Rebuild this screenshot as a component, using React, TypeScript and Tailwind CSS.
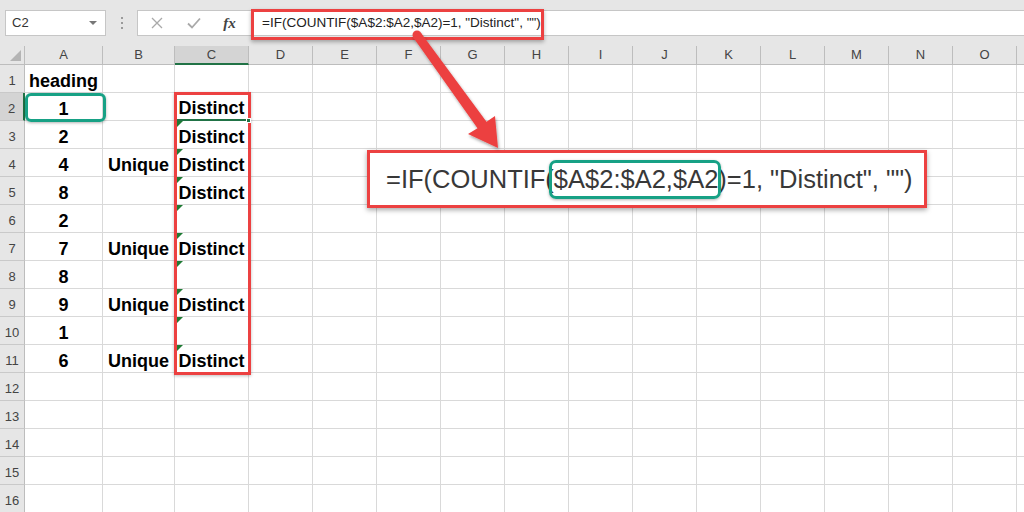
import React from "react";

type Col = { l: string; w: string };
const cols: Col[] = [
  { l: "A", w: "w-[78px]" },
  { l: "B", w: "w-[72px]" },
  { l: "C", w: "w-[74px]" },
  { l: "D", w: "w-[64px]" },
  { l: "E", w: "w-[64px]" },
  { l: "F", w: "w-[64px]" },
  { l: "G", w: "w-[64px]" },
  { l: "H", w: "w-[64px]" },
  { l: "I", w: "w-[64px]" },
  { l: "J", w: "w-[64px]" },
  { l: "K", w: "w-[64px]" },
  { l: "L", w: "w-[64px]" },
  { l: "M", w: "w-[64px]" },
  { l: "N", w: "w-[64px]" },
  { l: "O", w: "w-[64px]" },
  { l: "", w: "w-[64px]" },
];

const colA = ["heading", "1", "2", "4", "8", "2", "7", "8", "9", "1", "6"];
const colB: Record<number, string> = { 4: "Unique", 7: "Unique", 9: "Unique", 11: "Unique" };
const colC: Record<number, string> = { 2: "Distinct", 3: "Distinct", 4: "Distinct", 5: "Distinct", 7: "Distinct", 9: "Distinct", 11: "Distinct" };

function cellText(r: number, ci: number): string {
  if (ci === 0) return colA[r - 1] ?? "";
  if (ci === 1) return colB[r] ?? "";
  if (ci === 2) return colC[r] ?? "";
  return "";
}

const formula = '=IF(COUNTIF($A$2:$A2,$A2)=1, "Distinct", "")';

export default function App() {
  const rows = Array.from({ length: 16 }, (_, i) => i + 1);
  return (
    <div className="relative w-[1024px] h-[512px] overflow-hidden bg-white font-['Liberation_Sans',Arial,sans-serif] text-black">
      {/* toolbar */}
      <div className="h-[46px] bg-[#e6e6e6] flex items-start pt-[10px] pl-[5px]">
        <div className="w-[101px] h-[26px] shrink-0 bg-white border border-[#c6c6c6] flex items-center pl-[6px] pr-[8px] text-[13px] text-[#333]">
          <span className="flex-1">C2</span>
          <span className="w-0 h-0 border-l-[4px] border-r-[4px] border-t-[4px] border-l-transparent border-r-transparent border-t-[#777]" />
        </div>
        <div className="w-[31px] h-[26px] shrink-0 flex flex-col items-center justify-center gap-[3px]">
          <span className="w-[2px] h-[2px] bg-[#9a9a9a]" />
          <span className="w-[2px] h-[2px] bg-[#9a9a9a]" />
          <span className="w-[2px] h-[2px] bg-[#9a9a9a]" />
        </div>
        <div className="flex-1 h-[26px] bg-white border border-[#c6c6c6] border-r-0 flex items-center">
          <div className="w-[37px] shrink-0 flex justify-center">
            <svg width="12" height="12" viewBox="0 0 12 12">
              <path d="M1 1 L11 11 M11 1 L1 11" stroke="#a9a9a9" strokeWidth="1.3" fill="none" />
            </svg>
          </div>
          <div className="w-[37px] shrink-0 flex justify-center">
            <svg width="14" height="12" viewBox="0 0 14 12">
              <path d="M1 6.5 L5 10.5 L13 1.5" stroke="#a9a9a9" strokeWidth="1.8" fill="none" />
            </svg>
          </div>
          <div className="w-[35px] shrink-0 flex justify-center font-['Liberation_Serif',serif] italic text-[15px] leading-none text-[#444] font-bold">
            fx
          </div>
          <div className="pl-[15px] text-[13.5px] text-[#222] whitespace-nowrap">{formula}</div>
        </div>
      </div>

      {/* header row */}
      <div className="flex h-[19px]">
        <div className="w-[25px] shrink-0 bg-[#e6e6e6] border-r border-b border-[#bdbdbd] relative">
          <svg className="absolute right-[3px] bottom-[3px]" width="11" height="11" viewBox="0 0 11 11">
            <path d="M11 0 L11 11 L0 11 Z" fill="#b4b4b4" />
          </svg>
        </div>
        {cols.map((c, i) => (
          <div
            key={i}
            className={`${c.w} shrink-0 flex items-center justify-center text-[13px] text-[#444] border-r ${
              i === 2
                ? "bg-[#d4d4d4] border-b-2 border-b-[#217346] border-r-[#bdbdbd]"
                : "bg-[#e6e6e6] border-b border-[#bdbdbd]"
            }`}
          >
            {c.l}
          </div>
        ))}
      </div>

      {/* rows */}
      {rows.map((r) => (
        <div key={r} className="flex h-[28px]">
          <div
            className={`w-[25px] shrink-0 flex items-center justify-center pt-[4px] text-[13px] text-[#444] border-b border-b-[#c9c9c9] ${
              r === 2 ? "bg-[#d4d4d4] border-r-2 border-r-[#217346]" : "bg-[#e6e6e6] border-r border-r-[#bdbdbd]"
            }`}
          >
            {r}
          </div>
          {cols.map((c, ci) => {
            const t = cellText(r, ci);
            const sel = r === 2 && ci === 2;
            return (
              <div
                key={ci}
                className={`${c.w} shrink-0 relative flex items-center justify-center pt-[5px] border-r border-b border-[#d9d9d9] font-bold text-[18px] whitespace-nowrap ${
                  sel ? "border-b-2 border-b-[#217346]" : ""
                }`}
              >
                {t}
                {ci === 2 && r >= 3 && r <= 11 && (
                  <span className="absolute left-[2px] top-0 w-0 h-0 border-t-[6px] border-t-[#1e7b34] border-r-[6px] border-r-transparent" />
                )}
              </div>
            );
          })}
        </div>
      ))}

      {/* annotations */}
      <div className="absolute left-[251px] top-[9px] w-[293px] h-[31px] border-[3px] border-[#ec4141] shadow-[0_2px_4px_rgba(0,0,0,0.3)]" />
      <div className="absolute left-[25px] top-[93px] w-[81px] h-[29px] border-[3px] border-[#17a185] rounded-[6px] shadow-[0_1px_3px_rgba(0,0,0,0.3)]" />
      <div className="absolute left-[174px] top-[92px] w-[77px] h-[283px] border-[3px] border-[#ec4141] shadow-[0_1px_3px_rgba(0,0,0,0.25)]" />
      <div className="absolute left-[246px] top-[118px] w-[5px] h-[5px] bg-[#217346] border border-white" />

      <div className="absolute left-[367px] top-[150px] w-[560px] h-[58px] bg-white border-[3px] border-[#ec4141] shadow-[0_2px_5px_rgba(0,0,0,0.35)] flex items-center pl-[16px]">
        <div className="text-[25.5px] leading-[30px] text-[#383838] whitespace-nowrap">
          =IF(COUNTIF(
          <span className="relative inline-block">
            $A$2:$A2,$A2
            <span className="absolute -left-[5px] -right-[3px] -top-[4px] -bottom-[5px] border-[3px] border-[#17a185] rounded-[7px] shadow-[0_1px_3px_rgba(0,0,0,0.3)]" />
          </span>
          )=1, "Distinct", "")
        </div>
      </div>

      <svg className="absolute left-0 top-0 pointer-events-none" width="1024" height="512" viewBox="0 0 1024 512">
        <defs>
          <filter id="arrowShadow" x="-20%" y="-20%" width="140%" height="140%">
            <feDropShadow dx="1" dy="2" stdDeviation="1.5" floodColor="#000" floodOpacity="0.35" />
          </filter>
        </defs>
        <g filter="url(#arrowShadow)" fill="#ec4141">
          <path d="M413.3 37.6 L477.5 128.2 L468 134 L498 148 L495 116 L486.5 121.8 L420.7 32.4 Z" />
          <circle cx="417" cy="35" r="4.5" />
        </g>
      </svg>
    </div>
  );
}
